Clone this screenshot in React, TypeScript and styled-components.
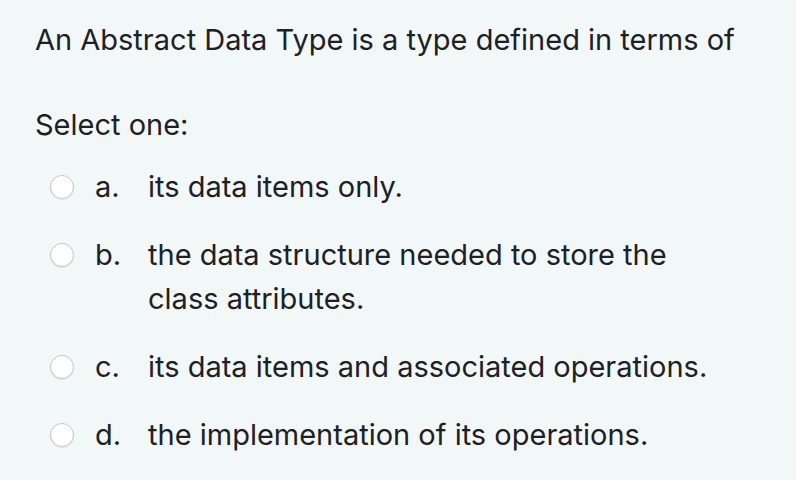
import React from "react";
import styled, { createGlobalStyle } from "styled-components";

const Global = createGlobalStyle`
	html, body {
		margin: 0;
		padding: 0;
		background: #f2f7f8;
	}
	body {
		font-family: Inter, "Liberation Sans", Arial, sans-serif;
		color: #1d2125;
	}
`;

const Page = styled.div`
	width: 796px;
	height: 480px;
	box-sizing: border-box;
	padding: 20px 0 0 35px;
	background: #f2f7f8;
	overflow: hidden;
`;

const Question = styled.div`
	font-size: 29px;
	line-height: 40px;
`;

const Prompt = styled.div`
	font-size: 29px;
	line-height: 40px;
	margin-top: 45px;
`;

const Answers = styled.div`
	display: flex;
	flex-direction: column;
	gap: 24px;
	margin-top: 20px;
	padding-left: 15px;
`;

const Option = styled.label`
	display: grid;
	grid-template-columns: 24px 32px 1fr;
	column-gap: 21px;
	font-size: 29px;
	line-height: 44px;
`;

const Radio = styled.span`
	width: 24px;
	height: 24px;
	margin-top: 10px;
	box-sizing: border-box;
	border-radius: 50%;
	border: 1px solid #c4c6c8;
	background: #fff;
	box-shadow: 0 1px 1px rgba(0, 0, 0, 0.08);
`;

const Letter = styled.span``;

const Text = styled.span`
	max-width: 580px;
`;

const options = [
	{ letter: "a.", text: "its data items only." },
	{ letter: "b.", text: "the data structure needed to store the class attributes." },
	{ letter: "c.", text: "its data items and associated operations." },
	{ letter: "d.", text: "the implementation of its operations." },
];

export default function App() {
	return (
		<Page>
			<Global />
			<Question>An Abstract Data Type is a type defined in terms of</Question>
			<Prompt>Select one:</Prompt>
			<Answers>
				{options.map((o) => (
					<Option key={o.letter}>
						<Radio />
						<Letter>{o.letter}</Letter>
						<Text>{o.text}</Text>
					</Option>
				))}
			</Answers>
		</Page>
	);
}
